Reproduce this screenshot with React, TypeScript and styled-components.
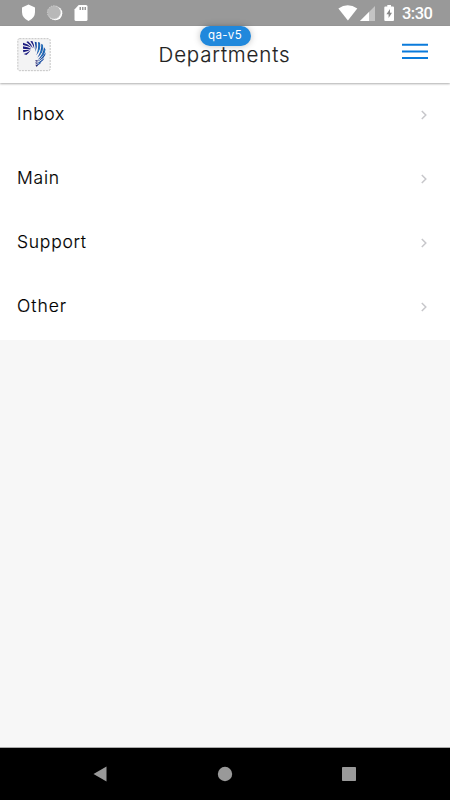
import React from "react";
import styled, { createGlobalStyle } from "styled-components";

const GlobalStyle = createGlobalStyle`
  * { box-sizing: border-box; }
  body { margin: 0; background: #f7f7f7; font-family: Inter, "Noto Sans", sans-serif; }
`;

const Screen = styled.div`
  width: 450px;
  height: 800px;
  display: flex;
  flex-direction: column;
  overflow: hidden;
  background: #f7f7f7;
`;

const StatusBar = styled.div`
  flex: none;
  height: 26px;
  padding: 0 17px 0 21px;
  display: flex;
  justify-content: space-between;
  background: #999;
  color: #fff;
`;

const StatusGroup = styled.div`
  display: flex;
  align-items: center;
  svg { display: block; }
`;

const Clock = styled.span`
  width: 31px;
  margin-left: 7px;
  padding-top: 2px;
  font: 500 16.5px/20px Roboto, sans-serif;
  letter-spacing: -0.55px;
  white-space: nowrap;
`;

const Header = styled.header`
  position: relative;
  z-index: 1;
  flex: none;
  height: 57px;
  padding: 0 22px 0 17px;
  display: grid;
  grid-template-columns: 34px 1fr 26px;
  background: #fff;
  box-shadow: 0 1px 2px rgba(0, 0, 0, 0.32);
`;

const Logo = styled.svg`
  width: 34px;
  height: 34px;
  margin-top: 12px;
`;

const Title = styled.h1`
  margin: 15px 0 0;
  padding-right: 4px;
  width: 100%;
  text-align: center;
  font-size: 20.5px;
  line-height: 28px;
  font-weight: 300;
  letter-spacing: 0.85px;
  color: #222;
  -webkit-text-stroke: 0.15px #222;
`;

const MenuButton = styled.button`
  width: 26px;
  height: 16px;
  margin: 17px 0 0;
  padding: 0;
  border: 0;
  background: none;
  svg { display: block; }
`;

const Badge = styled.span`
  position: absolute;
  top: 0;
  left: 199.5px;
  width: 51px;
  height: 20px;
  border-radius: 10px;
  background: #2088dc;
  color: #fff;
  font-size: 11.5px;
  line-height: 19px;
  letter-spacing: 0.35px;
  text-align: center;
  box-shadow: 0 0 7px rgba(0, 0, 0, 0.25);
`;

const List = styled.ul`
  flex: none;
  margin: 0;
  padding: 1px 0 0;
  list-style: none;
  background: #fff;
`;

const Row = styled.li`
  height: 64px;
  padding: 0 23px 4px 17px;
  display: flex;
  align-items: center;
  justify-content: space-between;
  svg { display: block; margin-top: 2px; }
`;

const Label = styled.span<{ $tracking: number }>`
  font-size: 17.5px;
  font-weight: 300;
  line-height: 26px;
  letter-spacing: ${(p) => p.$tracking}px;
  color: #000;
  -webkit-text-stroke: 0.15px #000;
`;

const NavBar = styled.nav`
  flex: none;
  height: 53px;
  margin-top: auto;
  padding: 0 94px 0 93px;
  border-top: 1px solid #aaa;
  display: flex;
  align-items: center;
  justify-content: space-between;
  background: #000;
  svg { display: block; }
`;

const departments = [
  { name: "Inbox", tracking: 0.65 },
  { name: "Main", tracking: 0.8 },
  { name: "Support", tracking: 0.75 },
  { name: "Other", tracking: 0.95 },
];

const ZebraLogo = () => (
  <Logo viewBox="21 18 102 102">
    <rect x="23.5" y="20" width="97" height="96" rx="5" fill="#f3f3f4" stroke="#c4c4c4" strokeWidth="3" strokeDasharray="6 3" />
    <g fill="#1c1c80">
      <path d="M39 32Q54 35 65 47Q54 43 39 39Z" />
      <path d="M39 43Q54 45 64 50Q50 52 39 50Z" />
      <path d="M39 54Q51 55 63 52Q52 60 40 61Z" />
      <path d="M41 66Q51 64 62 55Q56 64 49 69Z" />
      <path d="M49 30L54 28Q65 36 69 49Q60 39 49 30Z" />
      <path d="M61 28L67 27Q73 37 73 51Q69 38 61 28Z" />
    </g>
    <g fill="#14489f">
      <path d="M74 29L80 31Q83 46 76 60Q78 43 74 29Z" />
      <path d="M84 30L90 32Q94 52 79 70Q87 49 84 30Z" />
      <path d="M94 35L99 39Q103 60 82 77Q95 57 94 35Z" />
      <path d="M102 46L106 52Q107 70 83 84Q100 67 102 46Z" />
      <path d="M107 61Q108 78 80 90Q98 78 107 61Z" />
      <path d="M103 78Q99 90 79 96Q91 88 103 78Z" />
      <path d="M94 89Q91 98 77 101Q84 96 94 89Z" />
    </g>
    <g fill="none" stroke="#319bd6" strokeWidth="2">
      <path d="M87 32Q91 48 84 60M97 38Q100 53 90 67M105 52Q104 64 93 75" />
    </g>
    <g fill="#262672">
      <path d="M76 84L86 86L78 89Z" />
      <path d="M76 91L84 92L78 96Z" />
      <path d="M76 98L85 98L80 105Z" />
    </g>
  </Logo>
);

export default function App() {
  return (
    <>
      <GlobalStyle />
      <Screen>
        <StatusBar>
          <StatusGroup>
            <svg width="70" height="26" viewBox="21 0 70 26" fill="#fff">
              <path d="M28.5 4.5L35 7.4V12Q35 18 28.5 21Q22 18 22 12V7.4Z" />
              <circle cx="55.3" cy="13.2" r="7" />
              <circle cx="54" cy="12.4" r="6.6" fill="#b8b8b8" stroke="#d0d0d0" strokeWidth="1" strokeDasharray="1.5 1" />
              <path d="M78.7 5H86Q87.5 5 87.5 6.5V19.5Q87.5 21 86 21H76Q74.5 21 74.5 19.5V9.5Z" />
              <path d="M79.5 7h1.5v3h-1.5zM82 7h1.5v3H82zM84.5 7H86v3h-1.5z" fill="#999" />
            </svg>
          </StatusGroup>
          <StatusGroup>
            <svg width="58" height="26" viewBox="337 0 58 26" fill="#fff">
              <path d="M338.4 8.4Q347.7 2 357.3 8.4L347.9 20.5Z" />
              <path d="M375 6V21H360Z" fill="#c4c4c4" />
              <path d="M369 12V21H360Z" />
              <path d="M387.3 5H391V6.6H393Q394 6.6 394 7.6V20Q394 21 393 21H385.3Q384.3 21 384.3 20V7.6Q384.3 6.6 385.3 6.6H387.3Z" />
              <path d="M390 9L386.4 14.2H388.6V18L392 12.8H390Z" fill="#888" />
            </svg>
            <Clock>3:30</Clock>
          </StatusGroup>
        </StatusBar>

        <Header>
          <ZebraLogo />
          <Title>Departments</Title>
          <MenuButton aria-label="Menu">
            <svg width="26" height="16">
              <path d="M0 1.7H26M0 8.4H26M0 15H26" stroke="#0b7bdb" strokeWidth="2" />
            </svg>
          </MenuButton>
          <Badge>qa-v5</Badge>
        </Header>

        <List>
          {departments.map((d) => (
            <Row key={d.name}>
              <Label $tracking={d.tracking}>{d.name}</Label>
              <svg width="6" height="10" viewBox="0 0 6 10" fill="none" stroke="#c7c7cb" strokeWidth="1.5">
                <path d="M.8 1L4.8 5L.8 9" />
              </svg>
            </Row>
          ))}
        </List>

        <NavBar>
          <svg width="14" height="16" fill="#999"><path d="M.5 8L13.5.5V15.5Z" /></svg>
          <svg width="16" height="16" fill="#999"><circle cx="8" cy="8" r="7.2" /></svg>
          <svg width="14" height="14" fill="#999"><rect width="14" height="14" rx=".7" /></svg>
        </NavBar>
      </Screen>
    </>
  );
}
